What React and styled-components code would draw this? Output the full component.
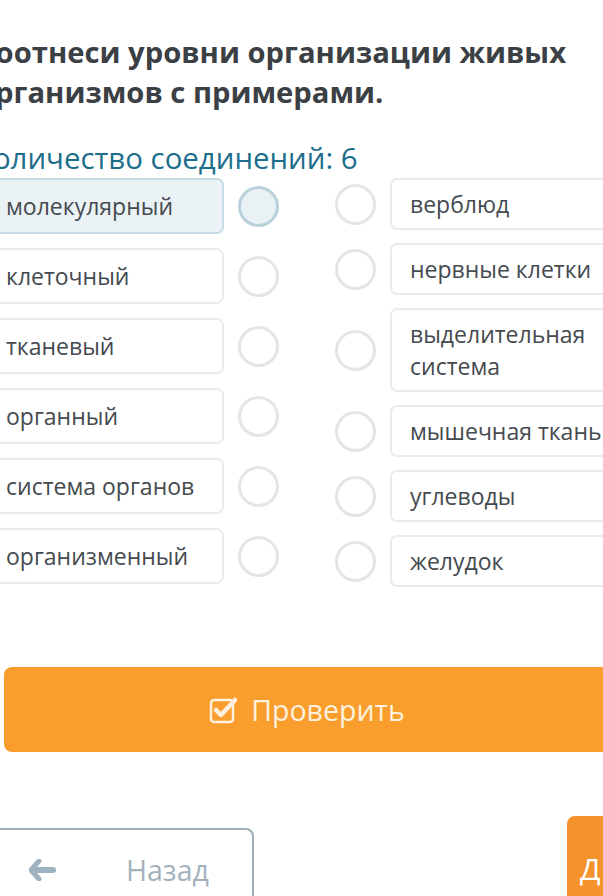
import React from 'react'
import styled, { createGlobalStyle } from 'styled-components'

const GlobalStyle = createGlobalStyle`
  html, body {
    margin: 0;
    padding: 0;
    background: #fff;
    overflow: hidden;
    width: 603px;
    height: 896px;
  }
  body {
    font-family: "Open Sans", "Noto Sans", sans-serif;
  }
`

const Page = styled.div`
  margin-left: -25px;
  width: 640px;
  padding-top: 32px;
`

const Title = styled.h1`
  margin: 0;
  padding-left: 2px;
  font-size: 29.2px;
  line-height: 40px;
  font-weight: 700;
  color: #3b4045;
  width: 620px;
`

const Counter = styled.div`
  margin-top: 28px;
  font-size: 29.4px;
  line-height: 36px;
  color: #1d6e8c;
`

const Match = styled.div`
  display: flex;
  margin-top: 2px;
  align-items: flex-start;
`

const Column = styled.div`
  display: flex;
  flex-direction: column;
  gap: ${p => p.$gap}px;
`

const Row = styled.div`
  display: flex;
  align-items: center;
  gap: ${p => p.$gap}px;
`

const LeftColumn = styled(Column)`
  margin-left: 11px;
`

const RightColumn = styled(Column)`
  margin-left: 56px;
`

const Item = styled.div`
  box-sizing: border-box;
  width: ${p => p.$width}px;
  min-height: ${p => p.$height}px;
  padding: ${p => p.$pad}px 18px;
  display: flex;
  align-items: center;
  border: 2px solid ${p => (p.$active ? '#c6dde6' : '#ebebeb')};
  border-radius: 7px;
  background: ${p => (p.$active ? '#eaf2f6' : '#fff')};
  font-size: 23px;
  line-height: 32px;
  color: #454a4f;
`

const Dot = styled.div`
  box-sizing: border-box;
  width: 41px;
  height: 41px;
  flex: none;
  border-radius: 50%;
  border: 3px solid ${p => (p.$active ? '#b9d1da' : '#e3e5e6')};
  background: ${p => (p.$active ? '#e9f1f5' : '#fff')};
`

const CheckButton = styled.button`
  box-sizing: border-box;
  margin-top: 80px;
  margin-left: 29px;
  width: 606px;
  height: 85px;
  border: none;
  border-radius: 8px;
  background: #f99d2c;
  display: flex;
  align-items: center;
  justify-content: center;
  gap: 12px;
  font-family: "Open Sans", "Noto Sans", sans-serif;
  font-size: 28.5px;
  color: #fdf1de;
  padding: 0;
`

const Footer = styled.div`
  display: flex;
  align-items: flex-start;
  justify-content: space-between;
  margin-top: 64px;
`

const BackButton = styled.div`
  box-sizing: border-box;
  margin-left: 8px;
  margin-top: 12px;
  width: 271px;
  height: 80px;
  border: 2px solid #9eaeb8;
  border-radius: 8px;
  display: flex;
  align-items: flex-start;
  padding-top: 20px;
  padding-left: 44px;
  gap: 70px;
  font-size: 28.5px;
  line-height: 40px;
  color: #a3b3bd;
`

const NextButton = styled.div`
  box-sizing: border-box;
  margin-right: -12px;
  width: 60px;
  height: 90px;
  border-radius: 8px 0 0 0;
  background: #f5922b;
  color: #fff;
  font-size: 30px;
  font-weight: 400;
  padding-top: 33px;
  padding-left: 13px;
  line-height: 40px;
`

const left = ['молекулярный', 'клеточный', 'тканевый', 'органный', 'система органов', 'организменный']
const right = ['верблюд', 'нервные клетки', 'выделительная система', 'мышечная ткань', 'углеводы', 'желудок']

function CheckIcon() {
  return (
    <svg width="30" height="28" viewBox="0 0 30 28">
      <rect x="2" y="4" width="22" height="22" rx="3" fill="none" stroke="#fdf1de" strokeWidth="2.5" />
      <path d="M7 14 L12 19 L26 4" fill="none" stroke="#fdf1de" strokeWidth="4.5" strokeLinecap="round" strokeLinejoin="round" />
    </svg>
  )
}

function ArrowIcon() {
  return (
    <svg width="27" height="22" viewBox="0 0 27 22" style={{ marginTop: 9 }}>
      <path d="M10 2 L2 11 L10 20" fill="none" stroke="#9fb2c0" strokeWidth="5" strokeLinecap="round" strokeLinejoin="round" />
      <path d="M4 11 H24" stroke="#9fb2c0" strokeWidth="6" strokeLinecap="round" />
    </svg>
  )
}

export default function App() {
  return (
    <Page>
      <GlobalStyle />
      <Title>Соотнеси уровни организации живых организмов с примерами.</Title>
      <Counter>Количество соединений: 6</Counter>
      <Match>
        <LeftColumn $gap={14}>
          {left.map((text, i) => (
            <Row key={text} $gap={14}>
              <Item $width={238} $height={56} $pad={10} $active={i === 0}>{text}</Item>
              <Dot $active={i === 0} />
            </Row>
          ))}
        </LeftColumn>
        <RightColumn $gap={13}>
          {right.map(text => (
            <Row key={text} $gap={14}>
              <Dot />
              <Item $width={250} $height={52} $pad={8}>{text}</Item>
            </Row>
          ))}
        </RightColumn>
      </Match>
      <CheckButton>
        <CheckIcon />
        Проверить
      </CheckButton>
      <Footer>
        <BackButton>
          <ArrowIcon />
          <span>Назад</span>
        </BackButton>
        <NextButton>Д</NextButton>
      </Footer>
    </Page>
  )
}
